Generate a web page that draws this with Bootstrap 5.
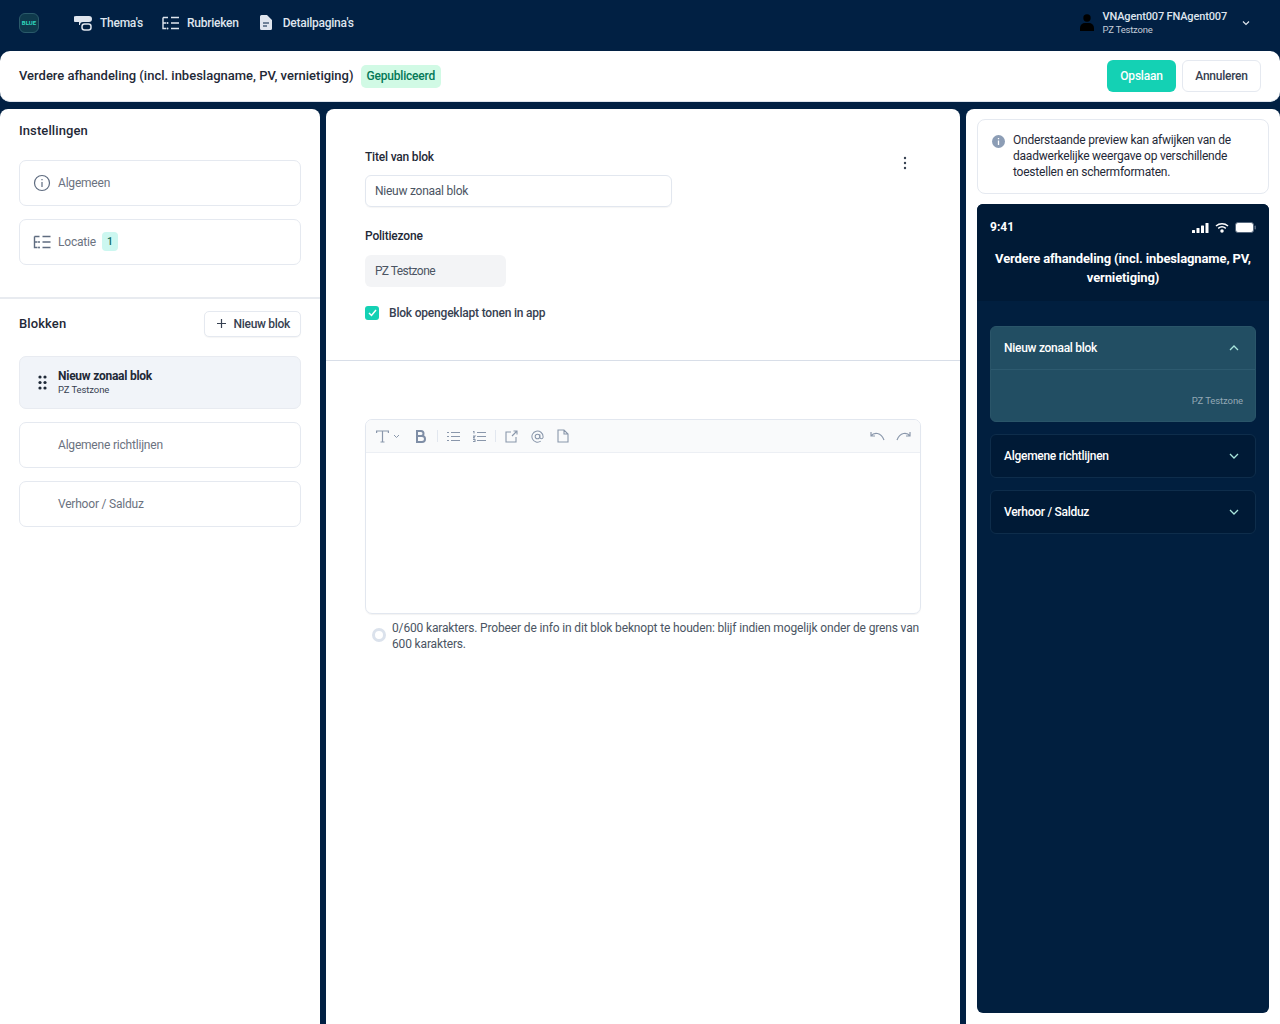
<!doctype html>
<html lang="nl">
<head>
<meta charset="utf-8">
<title>Blok bewerken</title>
<link href="https://cdn.jsdelivr.net/npm/bootstrap@5.3.0/dist/css/bootstrap.min.css" rel="stylesheet">
<style>
html,body{height:1024px;overflow:hidden}
body{background:#012043;font-family:Roboto,"Noto Sans",sans-serif;font-size:12px;color:#1f2937;letter-spacing:-.2px}
.topbar{height:51px;color:#dfe5ee;padding:0 30px 6px 19px}
.logo-box{width:20px;height:20px;border-radius:6px;background:#0f3a4c;border:1px solid #2a5a6a;color:#2fd6bd;font-size:6px;font-weight:700;letter-spacing:0}
.nav-entry{color:#dfe5ee;font-weight:500;text-decoration:none;font-size:12px;letter-spacing:-.25px}
.user-block{padding-top:1px}
.user-name{font-weight:500;font-size:11px;line-height:13px;color:#dfe5ee;letter-spacing:-.15px}
.user-zone{font-size:9.5px;line-height:13px;color:#c3ccd8;letter-spacing:-.2px}
.titlebar{height:51px;background:#fff;border-radius:10px;padding:0 19px;border-bottom:1px solid #dfe5ee}
.page-title{font-size:13px;font-weight:500;color:#1f2937;letter-spacing:0}
.state-pill{background:#d1fae5;color:#047857;font-weight:500;font-size:12px;border-radius:5px;height:23px;padding:0 6px;margin-left:7px;letter-spacing:-.2px}
.btn-save{background:#14d1b4;color:#fff;font-weight:500;font-size:12px;width:69px;height:32px;padding:0;border:0;border-radius:6px;letter-spacing:-.2px}
.btn-cancel{background:#fff;color:#374151;font-weight:500;font-size:12px;width:79px;height:32px;padding:0;border:1px solid #e5e9f0;border-radius:6px;letter-spacing:-.25px}
.columns{display:grid;grid-template-columns:320px 634px 314px;gap:6px;margin-top:7px;height:915px}
.pane{background:#fff;border-radius:8px 8px 0 0;min-width:0}
.pane-head{font-size:13px;font-weight:500;color:#1f2937;letter-spacing:.1px}
.set-block{padding:12px 19px 32px;border-bottom:2px solid #e8ebf0}
.nav-tile{height:46px;border:1px solid #e5e9f0;border-radius:7px;margin-bottom:13px;padding:0 13px;color:#6b7280;font-size:12px;background:#fff}
.nav-tile:last-child{margin-bottom:0}
.tile-ic{width:18px;margin-right:7px;flex:none}
.count-chip{background:#ccf7f0;color:#0f6b60;font-weight:500;font-size:10.5px;width:16px;height:19px;border-radius:4px;margin-left:6px}
.blocks{padding:12px 19px}
.btn-new{background:#fff;border:1px solid #e5e9f0;border-radius:5px;height:26px;width:97px;padding:0 10px 0 12px;font-size:12px;font-weight:500;color:#374151;box-shadow:0 1px 1px rgba(0,0,0,.04);letter-spacing:-.3px}
.tile-on{background:#f1f4f9;height:53px;border-color:#e8ebf1;color:#1f2937}
.tile-copy{padding-top:2px}
.tile-title{font-weight:700;font-size:12px;line-height:13px;letter-spacing:-.25px}
.tile-sub{font-size:9.5px;line-height:13px;color:#374151;letter-spacing:-.1px}
.edit-top{padding:40px 49px 39px 39px;border-bottom:1px solid #d8dee8;height:252px}
.field-label{font-weight:500;font-size:12px;color:#1f2937;line-height:16px;margin-bottom:10px}
.label-zone{margin-bottom:11px}
.field-title{width:307px;height:32px;border:1px solid #e2e7ef;border-radius:6px;padding:0 9px;color:#4b5563;font-size:12px;line-height:31px;box-shadow:0 1px 1px rgba(0,0,0,.04);margin-bottom:21px;letter-spacing:-.25px}
.field-zone{width:141px;height:32px;background:#f3f4f6;border-radius:6px;padding:0 10px;color:#4b5563;font-size:12px;line-height:32px;margin-bottom:17px;letter-spacing:-.55px}
.check-mark{width:14px;height:14px;border-radius:3px;background:#14d1b4;margin-right:10px}
.check-text{font-weight:500;color:#374151}
.dot-menu{margin-top:7px}
.editor-wrap{padding:58px 39px 0 39px}
.editor-box{width:556px;height:195px;border:1px solid #e2e7ef;border-radius:7px;box-shadow:0 1px 1px rgba(0,0,0,.05);overflow:hidden}
.editor-tools{height:33px;background:#f9fafb;border-bottom:1px solid #eceff4;padding:0 9px 0 10px}
.tool-sep{width:1px;height:12px;background:#e2e7ef}
.hint-row{width:556px;padding:6px 0 0 7px;color:#4b5563;line-height:16px;letter-spacing:-.15px}
.hint-ring{width:14px;height:14px;border:3px solid #dbe2ec;border-radius:50%;margin:8px 6px 0 0;flex:none}
.right-pane{padding:10px 11px 11px;background:#fff;height:915px;border-radius:8px 8px 0 0}
.notice-box{border:1px solid #e5e9f0;border-radius:8px;height:75px;padding:12px 14px 0 14px;line-height:16px;color:#1f2937;margin-bottom:10px;letter-spacing:-.22px}
.phone{height:809px;background:#011f3f;border-radius:6px;overflow:hidden;color:#fff}
.phone-top{background:#001a36;height:97px;padding:14px 13px 0;text-align:center}
.phone-time{font-weight:700;font-size:12px;letter-spacing:0}
.phone-title{font-weight:700;font-size:13px;line-height:19px;margin-top:13px;letter-spacing:-.12px}
.acc-wrap{padding:25px 13px}
.acc-open{background:#224e63;border:1px solid #2a5569;border-radius:6px;height:96px;margin-bottom:12px}
.acc-closed{background:#001a36;border:1px solid #0e2d4b;border-radius:6px;height:44px;margin-bottom:12px;padding:0 16px 0 13px}
.acc-head{height:43px;padding:0 16px 0 13px;border-bottom:1px solid #2d5a6f}
.acc-text{font-weight:500;font-size:12px;letter-spacing:-.28px}
.acc-foot{padding:24px 12px 0;text-align:right;color:#93a8b5;font-size:9.5px;letter-spacing:-.1px}
</style>
</head>
<body>
<header class="topbar d-flex align-items-center">
  <span class="logo-box d-flex align-items-center justify-content-center">BLUE</span>
  <nav class="d-flex align-items-center" style="margin-left:35px">
    <a class="nav-entry d-flex align-items-center" href="#" style="margin-right:19px;gap:8px">
      <svg width="18" height="16" viewBox="0 0 18 16"><path d="M2 1h13a2 2 0 0 1 0 6H9a3 3 0 0 0-3 3H5V7H2a3 3 0 0 1 0-6z" fill="#dfe5ee"/><rect x="8" y="9" width="9" height="6" rx="2.500" fill="none" stroke="#dfe5ee" stroke-width="1.500"/></svg>
      Thema's</a>
    <a class="nav-entry d-flex align-items-center" href="#" style="margin-right:21px;gap:8px">
      <svg width="17" height="14" viewBox="0 0 17 14" fill="none" stroke="#dfe5ee" stroke-width="1.400"><path d="M1 1.500h5M1 1.500V12.500h3M1 7h3M9 1.500h8M9 7h8M9 12.500h8"/><circle cx="5.500" cy="7" r="1" fill="#dfe5ee" stroke="none"/><circle cx="5.500" cy="12.500" r="1" fill="#dfe5ee" stroke="none"/></svg>
      Rubrieken</a>
    <a class="nav-entry d-flex align-items-center" href="#" style="gap:11px">
      <svg width="12" height="15" viewBox="0 0 12 15"><path d="M1.500 0H7l5 5v8.500a1.500 1.500 0 0 1-1.500 1.500h-9A1.500 1.500 0 0 1 0 13.500v-12A1.500 1.500 0 0 1 1.500 0z" fill="#dfe5ee"/><path d="M3 8h6M3 11h4" stroke="#012043" stroke-width="1.200"/></svg>
      Detailpagina's</a>
  </nav>
  <div class="ms-auto d-flex align-items-center">
    <svg width="14" height="17" viewBox="0 0 14 17" style="margin-right:9px"><circle cx="7" cy="4" r="3.700" fill="#000"/><path d="M0 17v-3a5 5 0 0 1 5-5h4a5 5 0 0 1 5 5v3z" fill="#000"/></svg>
    <div class="user-block"><div class="user-name">VNAgent007 FNAgent007</div><div class="user-zone">PZ Testzone</div></div>
    <svg width="8" height="6" viewBox="0 0 8 6" fill="none" stroke="#dfe5ee" stroke-width="1.200" style="margin-left:15px"><path d="M1 1.500l3 3 3-3"/></svg>
  </div>
</header>
<div class="titlebar d-flex align-items-center">
  <span class="page-title">Verdere afhandeling (incl. inbeslagname, PV, vernietiging)</span>
  <span class="state-pill d-inline-flex align-items-center">Gepubliceerd</span>
  <div class="ms-auto d-flex gap-2" style="gap:6px!important">
    <button class="btn btn-save" type="button">Opslaan</button>
    <button class="btn btn-cancel" type="button">Annuleren</button>
  </div>
</div>
<main class="columns">
  <aside class="pane">
    <div class="set-block">
      <div class="pane-head" style="margin-bottom:19px">Instellingen</div>
      <div class="nav-tile d-flex align-items-center">
        <svg class="tile-ic" width="18" height="18" viewBox="0 0 18 18" fill="none" stroke="#5f6c80" stroke-width="1.200"><circle cx="9" cy="9" r="7.500"/><path d="M9 8v5M9 5v1.200"/></svg>Algemeen</div>
      <div class="nav-tile d-flex align-items-center">
        <svg class="tile-ic" width="18" height="14" viewBox="0 0 17 14" fill="none" stroke="#5f6c80" stroke-width="1.400"><path d="M1 1.500h5M1 1.500V12.500h3M1 7h3M9 1.500h8M9 7h8M9 12.500h8"/><circle cx="5.500" cy="7" r="1" fill="#5f6c80" stroke="none"/><circle cx="5.500" cy="12.500" r="1" fill="#5f6c80" stroke="none"/></svg>Locatie<span class="count-chip d-inline-flex align-items-center justify-content-center">1</span></div>
    </div>
    <div class="blocks">
      <div class="d-flex align-items-center justify-content-between" style="margin-bottom:19px">
        <span class="pane-head">Blokken</span>
        <button class="btn btn-new d-flex align-items-center justify-content-between" type="button"><svg width="9" height="9" viewBox="0 0 9 9" stroke="#374151" stroke-width="1.200"><path d="M4.500 0v9M0 4.500h9"/></svg>Nieuw blok</button>
      </div>
      <div class="nav-tile tile-on d-flex align-items-center">
        <svg class="tile-ic" width="18" height="15" viewBox="0 0 18 15" fill="#1f2937"><circle cx="7" cy="2" r="1.600"/><circle cx="12" cy="2" r="1.600"/><circle cx="7" cy="7.500" r="1.600"/><circle cx="12" cy="7.500" r="1.600"/><circle cx="7" cy="13" r="1.600"/><circle cx="12" cy="13" r="1.600"/></svg>
        <div class="tile-copy"><div class="tile-title">Nieuw zonaal blok</div><div class="tile-sub">PZ Testzone</div></div>
      </div>
      <div class="nav-tile d-flex align-items-center" style="padding-left:38px">Algemene richtlijnen</div>
      <div class="nav-tile d-flex align-items-center" style="padding-left:38px">Verhoor / Salduz</div>
    </div>
  </aside>
  <section class="pane">
    <div class="edit-top">
      <div class="d-flex justify-content-between">
        <div>
          <div class="field-label">Titel van blok</div>
          <div class="field-title">Nieuw zonaal blok</div>
        </div>
        <svg class="dot-menu" width="12" height="14" viewBox="0 0 12 14" fill="#374151"><circle cx="6" cy="2" r="1.200"/><circle cx="6" cy="7" r="1.200"/><circle cx="6" cy="12" r="1.200"/></svg>
      </div>
      <div class="field-label label-zone">Politiezone</div>
      <div class="field-zone">PZ Testzone</div>
      <div class="d-flex align-items-center">
        <span class="check-mark d-inline-flex align-items-center justify-content-center"><svg width="9" height="8" viewBox="0 0 9 8" fill="none" stroke="#fff" stroke-width="1.500"><path d="M1 4l2.500 2.500L8 1"/></svg></span>
        <span class="check-text">Blok opengeklapt tonen in app</span>
      </div>
    </div>
    <div class="editor-wrap">
      <div class="editor-box">
        <div class="editor-tools d-flex align-items-center">
          <svg width="13" height="13" viewBox="0 0 13 13" fill="none" stroke="#8a97ab" stroke-width="1.200"><path d="M.6 3V1h11.800v2M6.500 1v11M4.500 12h4"/></svg>
          <svg width="7" height="5" viewBox="0 0 7 5" fill="none" stroke="#8a97ab" style="margin-left:4px"><path d="M1 1l2.500 2.500L6 1"/></svg>
          <svg width="11" height="13" viewBox="0 0 11 13" fill="none" stroke="#7f8ea6" stroke-width="2" style="margin-left:15px"><path d="M2 1v11h5a3 3 0 0 0 0-6H2h4a2.500 2.500 0 0 0 0-5z"/></svg>
          <span class="tool-sep" style="margin-left:11px"></span>
          <svg width="13" height="11" viewBox="0 0 13 11" fill="none" stroke="#8a97ab" style="margin-left:9px"><path d="M4 1.500h9M4 5.500h9M4 9.500h9M0 1.500h2M0 5.500h2M0 9.500h2" /></svg>
          <svg width="13" height="11" viewBox="0 0 13 11" fill="none" stroke="#8a97ab" style="margin-left:13px"><path d="M4 1.500h9M4 5.500h9M4 9.500h9M0 .5h1v2M0 5h2L0 7h2M0 8.500h2v2H0" stroke-width="1.100"/></svg>
          <span class="tool-sep" style="margin-left:9px"></span>
          <svg width="13" height="13" viewBox="0 0 13 13" fill="none" stroke="#8a97ab" stroke-width="1.100" style="margin-left:9px"><path d="M6 2H1v10h10V7M7 6l5-5M8.500 1H12v3.500"/></svg>
          <svg width="13" height="13" viewBox="0 0 14 14" fill="none" stroke="#8a97ab" stroke-width="1.100" style="margin-left:13px"><circle cx="7" cy="7" r="2.500"/><path d="M9.500 4.500V8a1.800 1.800 0 0 0 3.500 0V7a6 6 0 1 0-2.500 5"/></svg>
          <svg width="12" height="14" viewBox="0 0 12 14" fill="none" stroke="#8a97ab" stroke-width="1.100" style="margin-left:13px"><path d="M1 1h6l4 4v8H1zM7 1v4h4"/></svg>
          <svg class="ms-auto" width="15" height="10" viewBox="0 0 15 10" fill="none" stroke="#8a97ab" stroke-width="1.200"><path d="M1 1v4h4M1 5c3-4 10-4 13 4"/></svg>
          <svg width="15" height="10" viewBox="0 0 15 10" fill="none" stroke="#8a97ab" stroke-width="1.200" style="margin-left:11px"><path d="M14 1v4h-4M14 5C11 1 4 1 1 9"/></svg>
        </div>
      </div>
      <div class="hint-row d-flex"><span class="hint-ring"></span><span>0/600 karakters. Probeer de info in dit blok beknopt te houden: blijf indien mogelijk onder de grens van 600 karakters.</span></div>
    </div>
  </section>
  <aside class="right-pane">
    <div class="notice-box d-flex">
      <svg width="13" height="13" viewBox="0 0 13 13" style="margin:3px 8px 0 0;flex:none"><circle cx="6.500" cy="6.500" r="6.500" fill="#8c9db5"/><path d="M6.500 5.500v4.500M6.500 3v1.300" stroke="#fff" stroke-width="1.300"/></svg>
      <span>Onderstaande preview kan afwijken van de daadwerkelijke weergave op verschillende toestellen en schermformaten.</span>
    </div>
    <div class="phone">
      <div class="phone-top">
        <div class="d-flex align-items-center justify-content-between">
          <span class="phone-time">9:41</span>
          <span class="d-flex align-items-center" style="gap:6px">
            <svg width="17" height="11" viewBox="0 0 17 11" fill="#fff"><rect x="0" y="8" width="3" height="3" rx=".5"/><rect x="4.500" y="6" width="3" height="5" rx=".5"/><rect x="9" y="3.500" width="3" height="7.500" rx=".5"/><rect x="13.500" y="1" width="3" height="10" rx=".5"/></svg>
            <svg width="14" height="11" viewBox="0 0 14 11" fill="none" stroke="#fff" stroke-width="1.500"><path d="M1 4a9 9 0 0 1 12 0M3.200 6.300a6 6 0 0 1 7.600 0"/><circle cx="7" cy="9" r="1" fill="#fff"/></svg>
            <svg width="21" height="11" viewBox="0 0 21 11"><rect x=".5" y=".5" width="18" height="10" rx="2.500" fill="#fff" stroke="#55677d"/><rect x="19.500" y="3.500" width="1.500" height="4" rx=".7" fill="#55677d"/></svg>
          </span>
        </div>
        <div class="phone-title">Verdere afhandeling (incl. inbeslagname, PV, vernietiging)</div>
      </div>
      <div class="acc-wrap">
        <div class="acc-open">
          <div class="acc-head d-flex align-items-center justify-content-between"><span class="acc-text">Nieuw zonaal blok</span><svg width="10" height="6" viewBox="0 0 10 6" fill="none" stroke="#a8e6dc" stroke-width="1.300"><path d="M1 5l4-4 4 4"/></svg></div>
          <div class="acc-foot">PZ Testzone</div>
        </div>
        <div class="acc-closed d-flex align-items-center justify-content-between"><span class="acc-text">Algemene richtlijnen</span><svg width="10" height="6" viewBox="0 0 10 6" fill="none" stroke="#a8e6dc" stroke-width="1.300"><path d="M1 1l4 4 4-4"/></svg></div>
        <div class="acc-closed d-flex align-items-center justify-content-between"><span class="acc-text">Verhoor / Salduz</span><svg width="10" height="6" viewBox="0 0 10 6" fill="none" stroke="#a8e6dc" stroke-width="1.300"><path d="M1 1l4 4 4-4"/></svg></div>
      </div>
    </div>
  </aside>
</main>
<script src="https://cdn.jsdelivr.net/npm/bootstrap@5.3.0/dist/js/bootstrap.bundle.min.js"></script>
</body>
</html>
